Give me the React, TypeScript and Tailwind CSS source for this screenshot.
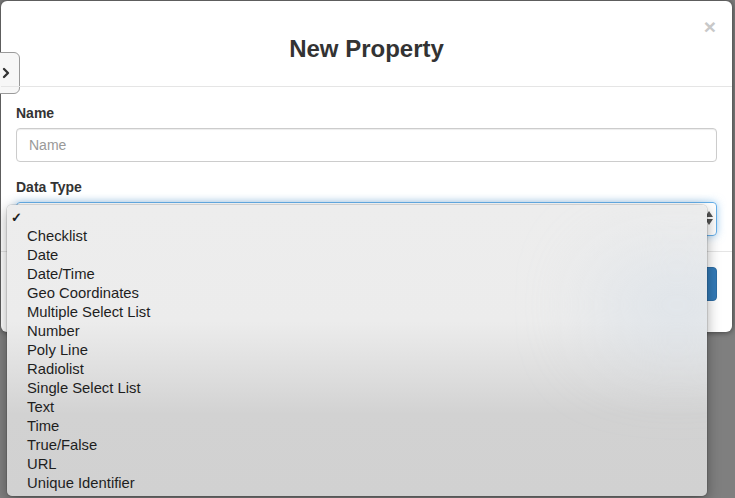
import { ChevronRight } from "lucide-react";

const types = [
  "Checklist",
  "Date",
  "Date/Time",
  "Geo Coordinates",
  "Multiple Select List",
  "Number",
  "Poly Line",
  "Radiolist",
  "Single Select List",
  "Text",
  "Time",
  "True/False",
  "URL",
  "Unique Identifier",
];

function TypeMenu() {
  return (
    <div className="absolute left-[-10px] top-[2px] z-20 w-[700px] overflow-hidden rounded-[5px] bg-[linear-gradient(180deg,#ededed_0%,#ececec_40%,#dedede_58%,#d2d2d2_72%,#d1d1d1_100%)] py-[3px] text-[14.8px] leading-[19px] text-[#1e1e1e] shadow-[0_4px_14px_rgba(0,0,0,0.35)] ring-1 ring-black/10">
      <div className="pointer-events-none absolute right-[-50px] top-[55px] h-[90px] w-[160px] rounded-full bg-[#cfdbe7]/50 blur-2xl" />
      <div className="relative flex h-[19px] items-center pl-[4px]">
        <span className="text-[13px] font-bold">✓</span>
      </div>
      {types.map((t) => (
        <div key={t} className="relative h-[19px] pl-[20px]">
          {t}
        </div>
      ))}
    </div>
  );
}

export default function App() {
  return (
    <div className="h-[498px] w-[735px] overflow-hidden bg-[#7f7f7f] pl-px pt-px font-['Liberation_Sans',Arial,sans-serif]">
      <div className="relative h-[331px] w-[731px] rounded-[6px] bg-white text-[#333] shadow-[0_0_6px_rgba(0,0,0,0.6)]">
        <div className="absolute left-[-2px] top-[51px] flex h-[42px] w-[21px] items-center rounded-r-[6px] border border-[#9a9a9a] bg-[#f7f7f7]">
          <ChevronRight size={16} strokeWidth={3.5} className="-ml-[2px] text-[#333]" />
        </div>

        <div className="relative flex h-[86px] items-center justify-center border-b border-[#e5e5e5]">
          <h4 className="mt-[10px] text-[24px] font-semibold leading-none">New Property</h4>
          <button className="absolute right-[16px] top-[15px] text-[21px] font-bold leading-none text-[#c8c8c8]">
            ×
          </button>
        </div>

        <div className="px-[15px] pt-[16px] pb-[15px]">
          <div className="mb-[15px]">
            <label className="mb-[5px] block text-[14px] font-bold leading-5">Name</label>
            <div className="flex h-[34px] items-center rounded-[4px] border border-[#ccc] px-[12px] text-[14px] text-[#999] shadow-[inset_0_1px_1px_rgba(0,0,0,0.075)]">
              Name
            </div>
          </div>
          <div>
            <label className="mb-[5px] block text-[14px] font-bold leading-5">Data Type</label>
            <div className="relative h-[34px] rounded-[4px] border border-[#66afe9] shadow-[0_0_8px_rgba(102,175,233,0.6)]">
              <div className="absolute right-[3px] top-[8px] flex flex-col items-center gap-[2px] text-[#555]">
                <svg width="8" height="6" viewBox="0 0 8 6">
                  <path d="M4 0L8 6H0z" fill="currentColor" />
                </svg>
                <svg width="8" height="6" viewBox="0 0 8 6">
                  <path d="M0 0H8L4 6z" fill="currentColor" />
                </svg>
              </div>
              <TypeMenu />
            </div>
          </div>
        </div>

        <div className="flex justify-end border-t border-[#e5e5e5] px-[15px] pt-[15px]">
          <button className="h-[34px] rounded-[4px] border border-[#2e6da4] bg-[#337ab7] px-[12px] text-[14px] text-white">
            Create
          </button>
        </div>
      </div>
    </div>
  );
}
